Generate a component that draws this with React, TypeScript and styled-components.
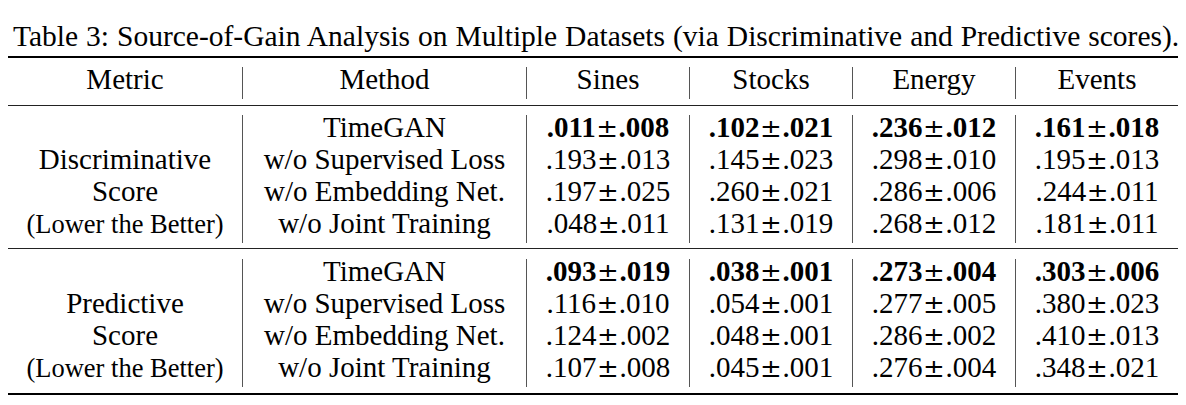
import React from "react";
import styled, { createGlobalStyle } from "styled-components";

type Row = { method: string; metric?: string; small?: boolean; values: string[] };

const HEADERS = ["Metric", "Method", "Sines", "Stocks", "Energy", "Events"];

const SECTIONS: Row[][] = [
  [
    { method: "TimeGAN", values: [".011±.008", ".102±.021", ".236±.012", ".161±.018"] },
    { method: "w/o Supervised Loss", metric: "Discriminative", values: [".193±.013", ".145±.023", ".298±.010", ".195±.013"] },
    { method: "w/o Embedding Net.", metric: "Score", values: [".197±.025", ".260±.021", ".286±.006", ".244±.011"] },
    { method: "w/o Joint Training", metric: "(Lower the Better)", small: true, values: [".048±.011", ".131±.019", ".268±.012", ".181±.011"] },
  ],
  [
    { method: "TimeGAN", values: [".093±.019", ".038±.001", ".273±.004", ".303±.006"] },
    { method: "w/o Supervised Loss", metric: "Predictive", values: [".116±.010", ".054±.001", ".277±.005", ".380±.023"] },
    { method: "w/o Embedding Net.", metric: "Score", values: [".124±.002", ".048±.001", ".286±.002", ".410±.013"] },
    { method: "w/o Joint Training", metric: "(Lower the Better)", small: true, values: [".107±.008", ".045±.001", ".276±.004", ".348±.021"] },
  ],
];

const Score = ({ value }: { value: string }) => {
  const [mean, std] = value.split("±");
  return (
    <>
      {mean}
      <PlusMinus>±</PlusMinus>
      {std}
    </>
  );
};

const App = () => {
  return (
    <Page>
      <GlobalStyle />
      <Caption>
        Table 3: Source-of-Gain Analysis on Multiple Datasets (via Discriminative and Predictive scores).
      </Caption>
      <Block $top="thick" $pt={9} $pb={6}>
        <Grid>
          {HEADERS.map((h, i) => (
            <Cell key={h} $bar={i > 0}>
              {h}
            </Cell>
          ))}
        </Grid>
      </Block>
      {SECTIONS.map((rows, s) => (
        <Block
          key={s}
          $top="thin"
          $pt={s === 0 ? 9 : 10}
          $pb={s === 0 ? 5 : 6}
          $last={s === SECTIONS.length - 1}
        >
          <Grid>
            {rows.map((r, i) => (
              <React.Fragment key={i}>
                <Cell $small={r.small}>{r.metric ?? ""}</Cell>
                <Cell $bar>{r.method}</Cell>
                {r.values.map((v, j) => (
                  <Cell key={j} $bar $bold={i === 0}>
                    <Score value={v} />
                  </Cell>
                ))}
              </React.Fragment>
            ))}
          </Grid>
        </Block>
      ))}
    </Page>
  );
};

export default App;

const GlobalStyle = createGlobalStyle`
  html, body {
    margin: 0;
    padding: 0;
    background: #fff;
  }
  body {
    font-family: "Liberation Serif", "Times New Roman", serif;
    color: #000;
  }
`;

const Page = styled.div`
  width: 1186px;
  height: 405px;
  box-sizing: border-box;
  padding: 20px 8px 0 8px;
  overflow: hidden;
`;

const Caption = styled.div`
  font-size: 29.5px;
  line-height: 32px;
  height: 32px;
  padding-left: 5px;
  margin-bottom: 4px;
  word-spacing: 0.6px;
  white-space: nowrap;
`;

const Block = styled.div<{ $top: "thick" | "thin"; $pt: number; $pb: number; $last?: boolean }>`
  border-top: ${({ $top }) => ($top === "thick" ? "2px solid #000" : "1px solid #222")};
  border-bottom: ${({ $last }) => ($last ? "2px solid #000" : "none")};
  padding-top: ${({ $pt }) => $pt}px;
  padding-bottom: ${({ $pb }) => $pb}px;
`;

const Grid = styled.div`
  display: grid;
  grid-template-columns: 234px 284px repeat(4, 163px);
  grid-auto-rows: 32px;
`;

const Cell = styled.div<{ $bar?: boolean; $bold?: boolean; $small?: boolean }>`
  box-sizing: border-box;
  height: 32px;
  text-align: center;
  white-space: nowrap;
  font-size: ${({ $small }) => ($small ? "26.5px" : "29px")};
  line-height: ${({ $small }) => ($small ? "27px" : "25px")};
  font-weight: ${({ $bold }) => ($bold ? 700 : 400)};
  border-left: ${({ $bar }) => ($bar ? "1px solid #555" : "none")};
`;

const PlusMinus = styled.span`
  font-family: "DejaVu Serif", "Liberation Serif", serif;
  font-size: 26px;
  font-weight: 400;
  line-height: 0;
  margin: 0 0.5px;
`;
